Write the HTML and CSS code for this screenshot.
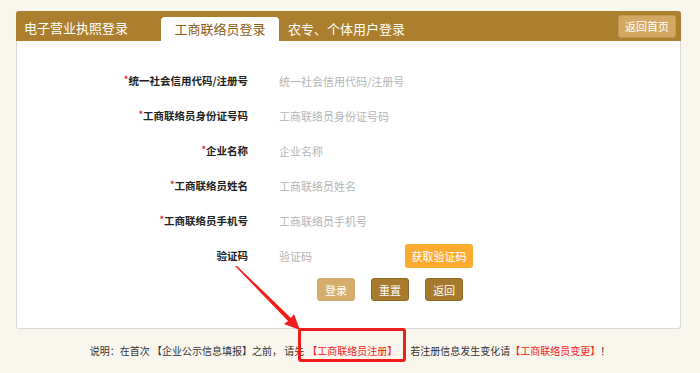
FILE: index.html
```html
<!DOCTYPE html>
<html lang="zh-CN">
<head>
  <meta charset="UTF-8" />
  <title>工商联络员登录</title>
  <link rel="stylesheet" href="styles.css">
</head>
<body>
  <div class="card">
    <div class="card-head">
      <div class="site-title">电子营业执照登录</div>
      <div class="tab active">工商联络员登录</div>
      <div class="tab">农专、个体用户登录</div>
      <a class="home-btn" href="#">返回首页</a>
    </div>

    <form class="login-form">
      <div class="row">
        <label><i>*</i>统一社会信用代码/注册号</label>
        <input type="text" placeholder="统一社会信用代码/注册号" />
      </div>
      <div class="row">
        <label><i>*</i>工商联络员身份证号码</label>
        <input type="text" placeholder="工商联络员身份证号码" />
      </div>
      <div class="row">
        <label><i>*</i>企业名称</label>
        <input type="text" placeholder="企业名称" />
      </div>
      <div class="row">
        <label><i>*</i>工商联络员姓名</label>
        <input type="text" placeholder="工商联络员姓名" />
      </div>
      <div class="row">
        <label><i>*</i>工商联络员手机号</label>
        <input type="text" placeholder="工商联络员手机号" />
      </div>
      <div class="row">
        <label>验证码</label>
        <input type="text" class="code" placeholder="验证码" />
        <button type="button" class="btn-code">获取验证码</button>
      </div>
      <div class="actions">
        <button type="button" class="btn light">登录</button>
        <button type="button" class="btn">重置</button>
        <button type="button" class="btn">返回</button>
      </div>
    </form>
  </div>

  <p class="note">说明：在首次 【企业公示信息填报】之前， 请先<span class="mark">【工商联络员注册】</span>&nbsp;&nbsp;&nbsp;&nbsp;若注册信息发生变化请<span class="red">【工商联络员变更】</span>！</p>

  <svg class="arrow" width="80" height="70" viewBox="0 0 80 70">
    <polygon points="1,0 3,0 57,52 60,48 66,64 50,58 54,55" fill="#f01d1d" />
  </svg>
</body>
</html>
```

FILE: styles.css
```css
* { box-sizing: border-box; }

body {
  margin: 0;
  background: #f9f6ee;
  font-family: "Noto Sans CJK SC", "Liberation Sans", sans-serif;
  color: #333;
  position: relative;
  height: 373px;
  overflow: hidden;
}

.card {
  margin: 11px 0 0 16px;
  width: 665px;
  height: 318px;
  background: #fff;
  border: 1px solid #dcdad4;
  border-top: 0;
  border-radius: 3px;
}

.card-head {
  display: flex;
  align-items: flex-end;
  height: 30px;
  background: #ab7f2e;
  border-radius: 3px 3px 0 0;
  margin: 0 -1px;
  padding: 0 5px 0 8px;
}

.site-title {
  color: #fff;
  font-size: 13px;
  line-height: 26px;
  width: 137px;
}

.tab {
  color: #fff;
  font-size: 13px;
  line-height: 24px;
  padding: 0 9px;
}
.tab.active {
  background: #fff;
  color: #8a5c1c;
  border-radius: 4px 4px 0 0;
  width: 118px;
  text-align: center;
}

.home-btn {
  margin-left: auto;
  align-self: center;
  background: #d3a862;
  border: 1px solid #c49a55;
  border-radius: 3px;
  color: #fff;
  font-size: 11px;
  line-height: 21px;
  padding: 0 6px;
  text-decoration: none;
}

.login-form {
  padding-top: 22px;
}

.row {
  display: flex;
  align-items: center;
  height: 35px;
}

.row label {
  width: 231px;
  text-align: right;
  font-size: 10.5px;
  font-weight: bold;
  color: #222;
  margin-right: 31px;
}
.row label i {
  color: #e02020;
  font-style: normal;
  font-size: 9px;
  vertical-align: top;
}

.row input {
  border: 0;
  outline: 0;
  width: 150px;
  font-family: inherit;
  font-size: 11px;
  padding: 0;
  color: #333;
}
.row input::placeholder { color: #b5b5b5; }
.row input.code { width: 126px; }

.btn-code {
  background: #fbab30;
  border: 0;
  border-radius: 3px;
  color: #fff;
  font-family: inherit;
  font-size: 11px;
  height: 24px;
  width: 68px;
  padding: 0;
}

.actions {
  display: flex;
  gap: 16px;
  padding-left: 300px;
  margin-top: 5px;
}

.btn {
  background: #a67b2d;
  border: 1px solid #936a22;
  border-radius: 3px;
  color: #fff;
  font-family: inherit;
  font-size: 11px;
  height: 23px;
  width: 38px;
  padding: 0;
}
.btn.light {
  background: #d4ae6a;
  border-color: #ccab6c;
}

.note {
  margin: 0;
  padding-top: 14px;
  text-align: center;
  font-size: 10px;
  color: #333;
  line-height: 16px;
}
.note .red { color: #f01d1d; }
.note .mark {
  color: #f01d1d;
  border: 3px solid #f01d1d;
  border-radius: 3px;
  padding: 12px 6px 1px;
  margin: 0 -5px 0 -6px;
}

.arrow {
  position: absolute;
  left: 234px;
  top: 266px;
}
```
